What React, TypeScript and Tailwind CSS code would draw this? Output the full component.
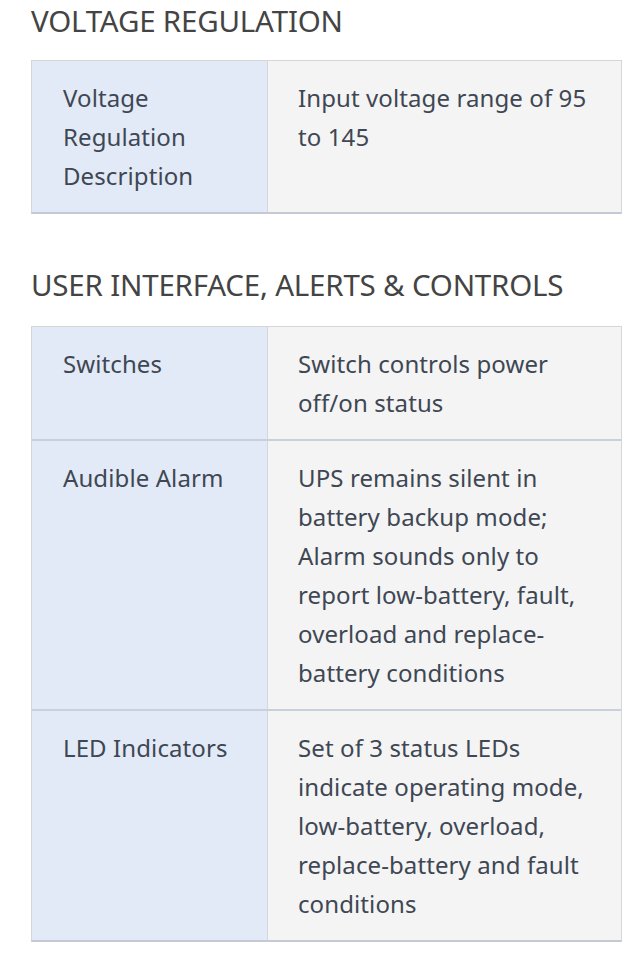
import React from "react";

type Row = { label: string; value: string };

const voltage: Row[] = [
  { label: "Voltage Regulation Description", value: "Input voltage range of 95 to 145" },
];

const controls: Row[] = [
  { label: "Switches", value: "Switch controls power off/on status" },
  {
    label: "Audible Alarm",
    value:
      "UPS remains silent in battery backup mode; Alarm sounds only to report low-battery, fault, overload and replace-battery conditions",
  },
  {
    label: "LED Indicators",
    value:
      "Set of 3 status LEDs indicate operating mode, low-battery, overload, replace-battery and fault conditions",
  },
];

const SpecTable = ({ rows }: { rows: Row[] }) => (
  <div className="border border-[#d6d6d6] border-b-2 border-b-[#c3cad6] text-[24px] leading-[39px] tracking-[0.1px]">
    {rows.map((row, i) => (
      <div
        key={row.label}
        className={`grid grid-cols-[236px_1fr] ${i > 0 ? "border-t-2 border-[#c9d0dc]" : ""}`}
      >
        <div className="bg-[#e3eaf7] border-r border-[#d2d8e2] pl-[31px] pr-4 pt-[17px] pb-[17px]">
          {row.label}
        </div>
        <div className="bg-[#f4f4f4] pl-[30px] pr-[24px] pt-[17px] pb-[17px]">{row.value}</div>
      </div>
    ))}
  </div>
);

export default function App() {
  return (
    <div
      className="bg-white min-h-screen pl-[31px] pr-[21px] pt-[1px] text-[#3e4753]"
      style={{ fontFamily: '"Noto Sans", "Open Sans", sans-serif' }}
    >
      <h2 className="text-[29.5px] leading-[40px] text-[#444] tracking-[-0.2px] mb-[19px]">VOLTAGE REGULATION</h2>
      <SpecTable rows={voltage} />
      <h2 className="text-[29.5px] leading-[40px] text-[#444] tracking-[-0.2px] mt-[51px] mb-[21px]">
        USER INTERFACE, ALERTS &amp; CONTROLS
      </h2>
      <SpecTable rows={controls} />
    </div>
  );
}
